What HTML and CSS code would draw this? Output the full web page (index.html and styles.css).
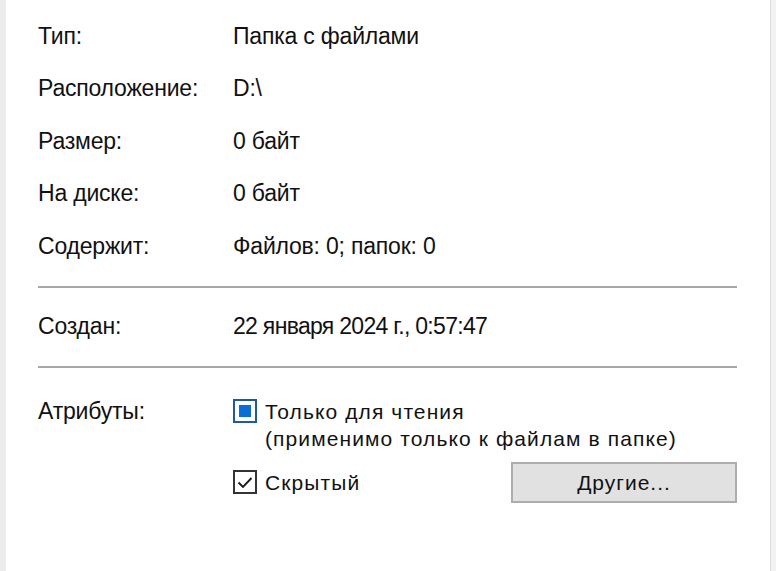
FILE: index.html
```html
<!DOCTYPE html>
<html lang="ru">
<head>
    <meta charset="UTF-8">
    <title>Свойства</title>
    <link rel="stylesheet" href="styles.css">
</head>
<body>
    <div class="panel">
        <div class="row"><span class="label">Тип:</span><span class="value">Папка с файлами</span></div>
        <div class="row"><span class="label">Расположение:</span><span class="value">D:\</span></div>
        <div class="row"><span class="label">Размер:</span><span class="value">0 байт</span></div>
        <div class="row"><span class="label">На диске:</span><span class="value">0 байт</span></div>
        <div class="row"><span class="label">Содержит:</span><span class="value">Файлов: 0; папок: 0</span></div>
        <hr class="sep">
        <div class="row"><span class="label">Создан:</span><span class="value date">22 января 2024 г., 0:57:47</span></div>
        <hr class="sep">
        <div class="attrs">
            <span class="label">Атрибуты:</span>
            <div class="attr-list">
                <div class="check">
                    <span class="box box-partial"><span class="dot"></span></span>
                    <span class="check-text">Только для чтения<br>(применимо только к файлам в папке)</span>
                </div>
                <div class="check-row">
                    <div class="check">
                        <span class="box">
                            <svg width="18" height="18" viewBox="0 0 18 18"><path d="M2.5 9.5 L7 14 L15.5 5" fill="none" stroke="#1a1a1a" stroke-width="1.9"/></svg>
                        </span>
                        <span class="check-text">Скрытый</span>
                    </div>
                    <button class="btn">Другие...</button>
                </div>
            </div>
        </div>
    </div>
</body>
</html>
```
FILE: styles.css
```css
html, body {
    margin: 0;
    height: 100%;
}
body {
    background: #f2f2f2;
    font-family: 'Liberation Sans', Arial, sans-serif;
    color: #111;
}
.panel {
    box-sizing: border-box;
    height: 100%;
    width: 771px;
    background: #fff;
    border-left: 6px solid #ececec;
    border-right: 1px solid #dcdcdc;
    padding: 10px 33px 0 32px;
}
.row {
    display: flex;
    height: 52.5px;
    align-items: center;
    font-size: 23px;
    letter-spacing: -0.2px;
}
.label {
    width: 195px;
    flex-shrink: 0;
}
.date {
    letter-spacing: -0.7px;
}
.sep {
    border: none;
    border-top: 2px solid #a8a8a8;
    margin: 13px 0 13px 0;
}
.attrs {
    display: flex;
    margin-top: 30px;
    font-size: 23px;
}
.attrs .label {
    letter-spacing: -0.2px;
    line-height: 26px;
}
.attr-list {
    flex: 1;
    display: flex;
    flex-direction: column;
    gap: 10px;
}
.check {
    display: flex;
    align-items: flex-start;
}
.check-text {
    line-height: 27px;
    font-size: 21px;
    letter-spacing: 1.1px;
    margin-left: 8px;
}
.box {
    box-sizing: border-box;
    width: 24px;
    height: 24px;
    border: 2px solid #333;
    display: flex;
    align-items: center;
    justify-content: center;
    margin-top: 1px;
}
.box-partial {
    border-color: #1e5a9c;
}
.dot {
    width: 12px;
    height: 12px;
    background: #0a6ed6;
}
.check-row {
    display: flex;
    align-items: center;
    justify-content: space-between;
}
.btn {
    width: 226px;
    height: 41px;
    background: #e1e1e1;
    border: 2px solid #adadad;
    font-family: 'Liberation Sans', Arial, sans-serif;
    font-size: 21px;
    letter-spacing: 1px;
    color: #111;
}
```
